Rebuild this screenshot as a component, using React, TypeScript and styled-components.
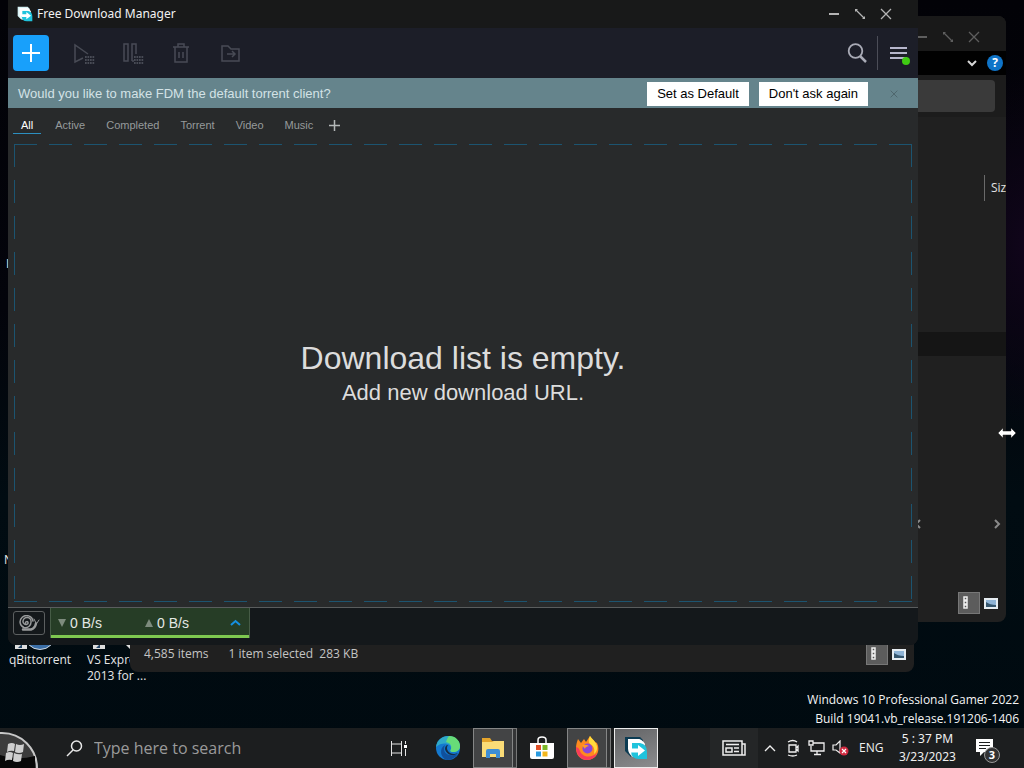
import React from "react";
import styled, { createGlobalStyle, css } from "styled-components";

const ui = `"Open Sans", "Noto Sans", sans-serif`;
const arial = `"Liberation Sans", Arial, sans-serif`;

const Global = createGlobalStyle`
  * { box-sizing: border-box; }
  body { margin: 0; background: #01080d; color: #e8e8e8; font: 12px/16px ${ui}; overflow: hidden; }
  button, input { font: inherit; color: inherit; }
  button { border: 0; padding: 0; background: none; display: inline-flex; align-items: center; justify-content: center; }
  svg { display: block; flex: none; }
`;

const Desktop = styled.div`
  min-height: 100vh;
  display: flex;
  flex-direction: column;
  background:
    radial-gradient(ellipse 80px 180px at 100% 32%, #10051a 0%, transparent 100%),
    linear-gradient(180deg, #020207 0%, #03040b 40%, #010c12 65%, #000a10 100%);
`;
const Area = styled.main`
  flex: 1;
  position: relative;
`;

/* desktop shortcuts */
const Shortcut = styled.a<{ $left: number; $top: number; $width: number }>`
  position: absolute;
  left: ${p => p.$left}px;
  top: ${p => p.$top}px;
  width: ${p => p.$width}px;
  display: flex;
  flex-direction: column;
  color: #e6e6e6;
  text-decoration: none;
  white-space: nowrap;
`;
const Build = styled.div`
  position: absolute;
  right: 5px;
  bottom: 0;
  text-align: right;
  line-height: 19px;
  color: #f4f4f4;
`;
const Cursor = styled.svg`
  position: absolute;
  left: 997px;
  top: 427px;
`;

/* windows */
const Explorer = styled.section<{ $top: number; $left: number; $right: number; $bottom: number }>`
  position: absolute;
  top: ${p => p.$top}px;
  left: ${p => p.$left}px;
  right: ${p => p.$right}px;
  bottom: ${p => p.$bottom}px;
  display: flex;
  flex-direction: column;
  overflow: hidden;
  border-radius: 8px;
  background: #202020;
  color: #c4c4c4;
`;
const ExTitle = styled.header`
  height: 35px;
  padding: 6px 26px 0 0;
  display: flex;
  align-items: center;
  justify-content: flex-end;
  gap: 14px;
  background: #191919;
  color: #5e5e5e;
`;
const ExRibbon = styled.div`
  height: 24px;
  padding-right: 3px;
  display: flex;
  align-items: center;
  justify-content: flex-end;
  gap: 9px;
  background: #010101;
  color: #d6d6d6;
`;
const HelpButton = styled.button`
  width: 16px;
  height: 16px;
  border-radius: 8px;
  background: #0f74c8;
  color: #fff;
  font-weight: 700;
`;
const ExAddress = styled.div`
  padding: 5px 11px 5px 0;
  background: #1c1c1c;
`;
const AddressField = styled.input`
  display: block;
  width: 100%;
  height: 32px;
  border: 0;
  border-radius: 4px;
  background: #3a3a3a;
`;
const ExBody = styled.div`
  flex: 1;
  display: flex;
  flex-direction: column;
`;
const ColumnHead = styled.div`
  margin-top: 58px;
  display: flex;
  justify-content: flex-end;
  color: #e0e0e0;
`;
const SizeColumn = styled.span`
  height: 26px;
  width: 22px;
  padding-left: 6px;
  line-height: 26px;
  border-left: 1px solid #6a6a6a;
`;
const SelectedRow = styled.div`
  margin-top: 131px;
  height: 24px;
  background: #151515;
`;
const ScrollRow = styled.div`
  flex: 1;
  display: flex;
  align-items: flex-end;
  justify-content: flex-end;
  gap: 70px;
  padding: 0 4px 55px 0;
  color: #8a8a8a;
`;
const ExStatus = styled.footer<{ $height: number }>`
  height: ${p => p.$height}px;
  padding: 0 8px 0 14px;
  display: flex;
  align-items: center;
  gap: 20px;
`;
const Views = styled.div`
  margin-left: auto;
  display: flex;
  align-items: center;
  gap: 4px;
`;
const ViewButton = styled.button<{ $on?: boolean }>`
  height: 22px;
  ${p => p.$on && css`width: 22px; background: #5c5c5c; border: 1px solid #777; justify-content: flex-start; padding-left: 3px;`}
`;

const Fdm = styled.section`
  position: absolute;
  top: 0;
  left: 8px;
  right: 106px;
  bottom: 83px;
  display: flex;
  flex-direction: column;
  overflow: hidden;
  border-radius: 0 0 8px 8px;
  background: #16191b;
`;
const TitleBar = styled.header`
  height: 28px;
  padding: 0 26px 0 9px;
  display: flex;
  align-items: center;
  gap: 4px;
  background: #181919;
`;
const Title = styled.h1`
  margin: 0;
  flex: 1;
  font-family: "Noto Sans", sans-serif;
  font-size: 12px;
  font-weight: 400;
  color: #f2f2f2;
`;
const WindowButtons = styled.div`
  display: flex;
  gap: 14px;
  color: #b4b4b4;
`;
const Toolbar = styled.div`
  height: 50px;
  padding: 0 7px 0 5px;
  display: flex;
  align-items: center;
  background: #1c1e28;
`;
const AddButton = styled.button`
  width: 36px;
  height: 36px;
  border-radius: 4px;
  background: #18a0fb;
`;
const Tools = styled.div`
  flex: 1;
  display: flex;
  gap: 25px;
  padding-left: 22px;
`;
const Tool = styled.button`
  width: 24px;
  height: 24px;
  color: #484b55;
`;
const MenuButton = styled.button`
  height: 34px;
  margin-left: 10px;
  padding-left: 12px;
  border-left: 1px solid #4b4d57;
`;
const Banner = styled.div`
  height: 30px;
  padding: 1px 19px 0 10px;
  display: flex;
  align-items: center;
  gap: 10px;
  background: #65848c;
  color: #d3e2e6;
  font: 13px/16px ${arial};
`;
const BannerText = styled.p`
  margin: 0;
  flex: 1;
`;
const BannerButton = styled.button`
  height: 24px;
  padding: 0 10px;
  background: #fff;
  color: #000;
`;
const BannerClose = styled.button`
  width: 10px;
  margin-left: 11px;
  color: #4b6269;
`;
const Tabs = styled.nav`
  height: 36px;
  padding: 8px 5px 0;
  display: flex;
  align-items: flex-start;
  gap: 7px;
  background: #282a2b;
  font: 11px/18px ${arial};
`;
const Tab = styled.button<{ $on?: boolean }>`
  height: 18px;
  padding: 0 ${p => (p.$on ? 8 : 7)}px;
  color: ${p => (p.$on ? "#ffffff" : "#969a9b")};
  border-bottom: 1px solid ${p => (p.$on ? "#2c8fc0" : "transparent")};
`;
const AddTab = styled.button`
  width: 15px;
  height: 18px;
`;
const ListPane = styled.div`
  flex: 1;
  padding: 0 6px 5px;
  display: flex;
  background: #282a2b;
  border-bottom: 1px solid #5a5d5e;
`;
const across = "repeating-linear-gradient(90deg, #1c5470 0 23px, transparent 23px 35px)";
const down = "repeating-linear-gradient(180deg, #1c5470 0 23px, transparent 23px 36px)";
const DropZone = styled.div`
  flex: 1;
  padding-top: 4px;
  display: flex;
  flex-direction: column;
  align-items: center;
  justify-content: center;
  color: #dcdcdc;
  font-family: ${arial};
  background:
    ${across} top / 100% 1px no-repeat,
    ${across} bottom / 100% 1px no-repeat,
    ${down} left / 1px 100% no-repeat,
    ${down} right / 1px 100% no-repeat;
`;
const EmptyTitle = styled.h2`
  margin: 0;
  font-size: 32px;
  line-height: 36px;
  font-weight: 400;
`;
const EmptyHint = styled.p`
  margin: 0;
  font-size: 22px;
  line-height: 34px;
`;
const FdmStatus = styled.footer`
  height: 37px;
  padding: 0 5px 7px;
  display: flex;
  align-items: center;
  gap: 5px;
  background: #14181b;
`;
const SnailButton = styled.button`
  width: 32px;
  height: 24px;
  border: 1px solid #5c5f60;
  border-radius: 3px;
`;
const Speed = styled.button`
  width: 200px;
  height: 30px;
  padding: 0 8px 0 7px;
  justify-content: flex-start;
  background: #263d26;
  border: solid #465c46;
  border-width: 0 1px 0 1px;
  box-shadow: inset 0 -3px #7ec850;
  font: 14px/28px ${arial};
  color: #e4e8e4;
`;
const Rate = styled.span<{ $grow?: boolean }>`
  display: flex;
  align-items: center;
  gap: 4px;
  ${p => (p.$grow ? "flex: 1;" : "width: 87px;")}
`;

/* taskbar */
const Taskbar = styled.footer`
  height: 40px;
  display: flex;
  align-items: stretch;
  background: #1c1e1f;
`;
const StartButton = styled.button`
  width: 46px;
  align-self: stretch;
`;
const Search = styled.label`
  flex: 1;
  min-width: 0;
  padding-left: 20px;
  display: flex;
  align-items: center;
  gap: 11px;
`;
const SearchInput = styled.input`
  flex: 1;
  min-width: 0;
  padding: 0;
  border: 0;
  outline: 0;
  background: none;
  font-size: 16px;
  line-height: 22px;
  &::placeholder { color: #9a9a9a; opacity: 1; }
`;
const Apps = styled.div`
  display: flex;
  align-items: stretch;
`;
const AppButton = styled.button<{ $open?: boolean; $active?: boolean }>`
  width: 50px;
  ${p => p.$open && css`
    width: 40px;
    margin-right: 4px;
    background: #434445;
    border: 1px solid #858686;
    box-shadow: 4px 0 0 -1px #343536, 4px 0 0 0 #777878;
  `}
  ${p => p.$active && css`
    width: 44px;
    margin-left: 3px;
    background: linear-gradient(160deg, #636466, #8b8c8e);
    border: 1px solid #ececec;
  `}
`;
const Tray = styled.div`
  width: 366px;
  display: flex;
  align-items: center;
  padding-left: 52px;
  color: #f0f0f0;
`;
const News = styled.button`
  width: 48px;
  height: 40px;
  background: #242627;
`;
const TrayIcons = styled.div`
  display: flex;
  align-items: center;
  gap: 7px;
  padding: 0 10px 0 6px;
`;
const Clock = styled.div`
  width: 84px;
  margin-left: 2px;
  font-family: "Noto Sans", sans-serif;
  text-align: center;
  line-height: 18px;
  white-space: pre;
`;
const Notice = styled.button`
  margin-left: 6px;
  padding-top: 6px;
`;

const Minimize = () => <svg width="12" height="12" viewBox="0 0 12 12"><path d="M1 6h10" stroke="currentColor" strokeWidth="2" /></svg>;
const Expand = () => (
  <svg width="12" height="12" viewBox="0 0 12 12" fill="none" stroke="currentColor">
    <path d="M1.500 1.500l9 9" strokeWidth="1.300" /><path d="M1 1h3L1 4zM11 11H8L11 8z" fill="currentColor" stroke="none" />
  </svg>
);
const Close = ({ size = 12 }: { size?: number }) => (
  <svg width={size} height={size} viewBox="0 0 12 12" fill="none" stroke="currentColor" strokeWidth="1.300"><path d="M1 1l10 10M11 1L1 11" /></svg>
);
const Controls = () => (
  <>
    <button aria-label="Minimize"><Minimize /></button>
    <button aria-label="Maximize"><Expand /></button>
    <button aria-label="Close"><Close /></button>
  </>
);
const FdmLogo = ({ size, edge }: { size: number; edge: string }) => (
  <svg width={size} height={size} viewBox="0 0 24 24">
    <path d="M1 1h15l3 3v6H7v11l-6-6z" fill={edge} />
    <path d="M4 3h10q4 0 7 5l-3 13H9q-5-3-5-9z" fill="#fff" />
    <path d="M7 7h9q7 1 7 9v7h-8q-8 0-8-8z" fill="#20c3dc" />
    <path d="M4 3h11l4 4H8v9l-4-3z" fill="#fff" />
    <path d="M7 12.500h7V9l7 5.500-7 5.500v-3.500H7z" fill="#fff" />
  </svg>
);
const Dots = () => (
  <g fill="currentColor" stroke="none">
    {[0, 1, 2].map(r => [0, 1, 2, 3].map(c => <rect key={`${r}${c}`} x={14 + c * 2.500} y={15 + r * 3} width="1.700" height="2" />))}
  </g>
);
const ListIcon = () => (
  <svg width="8" height="14" viewBox="0 0 8 14" fill="#555" stroke="#eee" strokeWidth="1.500"><path d="M2 1h3v3H2zM2 5h3v3H2zM2 9h3v3H2z" /></svg>
);
const PictureIcon = () => (
  <svg width="14" height="11" viewBox="0 0 14 11"><path d="M0 0h14v11H0z" fill="#e6edf2" /><path d="M2 2h10v7H2z" fill="#8fb4d6" /><path d="M2 4q4 3 10 3v2H2z" fill="#35566e" /></svg>
);
const ViewSwitch = () => (
  <Views>
    <ViewButton $on aria-label="Details"><ListIcon /></ViewButton>
    <ViewButton aria-label="Large icons"><PictureIcon /></ViewButton>
  </Views>
);
const ScrollArrow = ({ flip }: { flip?: boolean }) => (
  <svg width="9" height="10" viewBox="0 0 9 10" fill="none" stroke="currentColor" strokeWidth="2"><path d={flip ? "M6 1L2 5l4 4" : "M2 1l4 4-4 4"} /></svg>
);

export default function App() {
  return (
    <>
      <Global />
      <Desktop>
        <Area>
          <Shortcut href="#qb" $left={9} $top={640} $width={70}>
            <svg width="60" height="12" viewBox="0 0 60 12"><path d="M6 0h12v9H6z" fill="#ddd" /><path d="M9 8l4-4v4z" fill="#246" /><circle cx="31" cy="-6" r="15.500" fill="#3b6fa8" stroke="#cfd8e0" /></svg>
            qBittorrent
          </Shortcut>
          <Shortcut href="#vs" $left={87} $top={640} $width={70}>
            <svg width="60" height="12" viewBox="0 0 60 12"><path d="M6 0h12v9H6z" fill="#ddd" /><path d="M9 8l4-4v4z" fill="#246" /><path d="M36 2h7v7z" fill="#ddd" /></svg>
            <span>VS Express<br />2013 for ...</span>
          </Shortcut>
          <Shortcut href="#n" $left={4} $top={552} $width={30}>N</Shortcut>
          <Shortcut href="#i" $left={6} $top={256} $width={30}>I</Shortcut>
          <Build>
            <div>Windows 10 Professional Gamer 2022</div>
            <div>Build 19041.vb_release.191206-1406</div>
          </Build>

          <Explorer $top={16} $left={300} $right={18} $bottom={106} aria-label="File Explorer">
            <ExTitle><Controls /></ExTitle>
            <ExRibbon>
              <button aria-label="Expand ribbon"><svg width="12" height="8" viewBox="0 0 12 8" fill="none" stroke="currentColor" strokeWidth="2"><path d="M2 2l4 4 4-4" /></svg></button>
              <HelpButton>?</HelpButton>
            </ExRibbon>
            <ExAddress><AddressField aria-label="Address" /></ExAddress>
            <ExBody>
              <ColumnHead><SizeColumn>Siz</SizeColumn></ColumnHead>
              <SelectedRow />
              <ScrollRow>
                <button aria-label="Scroll left"><ScrollArrow flip /></button>
                <button aria-label="Scroll right"><ScrollArrow /></button>
              </ScrollRow>
            </ExBody>
            <ExStatus $height={38}><ViewSwitch /></ExStatus>
          </Explorer>

          <Explorer $top={200} $left={130} $right={110} $bottom={56} aria-label="Folder">
            <ExBody />
            <ExStatus $height={36}>
              <span>4,585 items</span>
              <span>1 item selected&nbsp; 283 KB</span>
              <ViewSwitch />
            </ExStatus>
          </Explorer>

          <Fdm>
            <TitleBar>
              <FdmLogo size={16} edge="#d8f4f6" />
              <Title>Free Download Manager</Title>
              <WindowButtons><Controls /></WindowButtons>
            </TitleBar>
            <Toolbar>
              <AddButton aria-label="Add download"><svg width="20" height="20" viewBox="0 0 20 20" stroke="#fff" strokeWidth="2"><path d="M1 10h18M10 1v18" /></svg></AddButton>
              <Tools>
                <Tool aria-label="Start all"><svg width="24" height="24" viewBox="0 0 24 24" fill="none" stroke="currentColor" strokeWidth="1.500"><path d="M12 17l-8 4V4l13 9" /><Dots /></svg></Tool>
                <Tool aria-label="Pause all"><svg width="24" height="24" viewBox="0 0 24 24" fill="none" stroke="currentColor" strokeWidth="1.500"><path d="M4 3h4v17H4zM12 20V3h4v10M12 20h2" /><Dots /></svg></Tool>
                <Tool aria-label="Delete"><svg width="24" height="24" viewBox="0 0 24 24" fill="none" stroke="currentColor" strokeWidth="1.500"><path d="M4 6h16M9 6V3h6v3M6 6v15h12V6M10 11v6M14 11v6" /></svg></Tool>
                <Tool aria-label="Move to folder"><svg width="24" height="24" viewBox="0 0 24 24" fill="none" stroke="currentColor" strokeWidth="1.500"><path d="M4 20V5h6l3 3h8v12H4zM9 13h8M14 10l3 3-3 3" /></svg></Tool>
              </Tools>
              <button aria-label="Search"><svg width="20" height="20" viewBox="0 0 20 20" fill="none" stroke="#a9abb6" strokeWidth="1.800"><circle cx="8.500" cy="8" r="6.800" /><path d="M13 13l6 6" strokeWidth="2.500" /></svg></button>
              <MenuButton aria-label="Menu"><svg width="21" height="24" viewBox="0 0 21 24"><path d="M0 7h17M0 12h17M0 17h17" stroke="#b6b6cc" strokeWidth="2" /><circle cx="16" cy="20" r="4" fill="#3fcb13" /></svg></MenuButton>
            </Toolbar>
            <Banner>
              <BannerText>Would you like to make FDM the default torrent client?</BannerText>
              <BannerButton>Set as Default</BannerButton>
              <BannerButton>Don't ask again</BannerButton>
              <BannerClose aria-label="Dismiss"><Close size={8} /></BannerClose>
            </Banner>
            <Tabs>
              <Tab $on>All</Tab>
              <Tab>Active</Tab>
              <Tab>Completed</Tab>
              <Tab>Torrent</Tab>
              <Tab>Video</Tab>
              <Tab>Music</Tab>
              <AddTab aria-label="Add tab"><svg width="11" height="11" viewBox="0 0 11 11" stroke="#b4b8b8" strokeWidth="1.500"><path d="M0 5.500h11M5.500 0v11" /></svg></AddTab>
            </Tabs>
            <ListPane>
              <DropZone>
                <EmptyTitle>Download list is empty.</EmptyTitle>
                <EmptyHint>Add new download URL.</EmptyHint>
              </DropZone>
            </ListPane>
            <FdmStatus>
              <SnailButton aria-label="Snail mode">
                <svg width="22" height="16" viewBox="0 0 22 16" fill="none" stroke="#999b9c" strokeWidth="1.500" strokeLinecap="round">
                  <path d="M7.500 8a1.300 1.300 0 1 1 1.500 1.200 3 3 0 0 1-4-3.200 4 4 0 0 1 8 1 5.500 5.500 0 0 1-7 5.500A6 6 0 0 1 4 2.500 6.500 6.500 0 0 1 15 6" />
                  <path d="M5 14.500h8q4-1 5-6" strokeWidth="2.500" /><path d="M18 8l-2-4M19 8l2-3" strokeWidth="1" />
                </svg>
              </SnailButton>
              <Speed aria-label="Speed">
                <Rate><svg width="8" height="8" viewBox="0 0 8 8"><path d="M0 0h8L4 8z" fill="#7d8b7d" /></svg>0 B/s</Rate>
                <Rate $grow><svg width="8" height="8" viewBox="0 0 8 8"><path d="M0 8h8L4 0z" fill="#7d8b7d" /></svg>0 B/s</Rate>
                <svg width="11" height="8" viewBox="0 0 11 8" fill="none" stroke="#158fe0" strokeWidth="2"><path d="M1 6l4.500-4L10 6" /></svg>
              </Speed>
            </FdmStatus>
          </Fdm>

          <Cursor width="20" height="12" viewBox="0 0 20 12"><path d="M1 6l5-5v3h8V1l5 5-5 5V8H6v3z" fill="#fff" stroke="#222" strokeWidth=".5" /></Cursor>
        </Area>

        <Taskbar>
          <StartButton aria-label="Start">
            <svg width="46" height="40" viewBox="0 0 46 40">
              <circle cx="2" cy="40" r="35" fill="#3c3c3c" stroke="#c8c8c8" strokeWidth="2" />
              <path d="M0 27q16 6 35 1v12H0z" fill="#080808" />
              <path d="M8 16q4-2 7 0l-1 7q-4-1-7 1zM16 16q4 2 8 0l-1 8q-4 2-8 0zM6 25q4-2 7 0l-1 7q-4-1-7 1zM14 25q4 2 8 1l-1 7q-4 2-8 0z" fill="#cfcfcf" />
            </svg>
          </StartButton>
          <Search>
            <svg width="17" height="17" viewBox="0 0 17 17" fill="none" stroke="#e8e8e8" strokeWidth="1.500"><circle cx="10.500" cy="6" r="5" /><path d="M7 10l-6 6" /></svg>
            <SearchInput aria-label="Search" placeholder="Type here to search" />
          </Search>
          <Apps>
            <AppButton aria-label="Task View"><svg width="17" height="17" viewBox="0 0 17 17" fill="none" stroke="#e4e4e4"><path d="M1.500 1v3h10V1M1.500 16v-3h10v3M1.500 4v9M11.500 4v9M15.500 1v3M15.500 9v7" /><path d="M14 5h3v3h-3z" fill="#fff" stroke="none" /></svg></AppButton>
            <AppButton aria-label="Edge">
              <svg width="24" height="24" viewBox="0 0 24 24">
                <circle cx="12" cy="12" r="12" fill="#1479cf" />
                <path d="M0 11C1 4 6 0 12 0c7 0 12 5 12 10 0 4-3 6-7 6-3 0-3-1-2-3 1-6-9-8-15-2z" fill="#2fa9c8" />
                <path d="M13 0c7 0 11 5 11 10 0 4-3 6-7 6-3 0-3-1-2-3 1-4-1-6-5-7 1-3 2-5 3-6z" fill="#67dc78" />
                <path d="M9 9c-3 6 1 13 13 9-3 4-7 6-11 6C4 22 3 12 9 9z" fill="#10509c" />
                <path d="M12 9c-3 4 1 9 6 9 2 0 3-1 4-1-4 4-12 2-13-4 0-2 1-4 3-4z" fill="#172c44" />
              </svg>
            </AppButton>
            <AppButton $open aria-label="File Explorer">
              <svg width="24" height="22" viewBox="0 0 24 22"><path d="M1 1h8l2 3h12v16H1z" fill="#e5a52c" /><path d="M1 5h10l2-1h10v16H1z" fill="#fbdc77" /><path d="M5 21v-7q0-2 2-2h10q2 0 2 2v7h-4v-4H9v4z" fill="#3f8ed4" /></svg>
            </AppButton>
            <AppButton aria-label="Store">
              <svg width="24" height="24" viewBox="0 0 24 24"><path d="M8 7V4q0-3 4-3t4 3v3" fill="none" stroke="#fff" strokeWidth="1.500" /><path d="M0 7h24v14q0 2-2 2H2q-2 0-2-2z" fill="#fff" /><path d="M6 9h5v5H6z" fill="#e05028" /><path d="M12.500 9h5v5h-5z" fill="#7cb728" /><path d="M6 15.500h5v5H6z" fill="#2a9be0" /><path d="M12.500 15.500h5v5h-5z" fill="#f2b61c" /></svg>
            </AppButton>
            <AppButton $open aria-label="Firefox">
              <svg width="24" height="24" viewBox="0 0 24 24"><path d="M3 3l3 4 3-4 2 3 4-6c2 3 4 4 5 6l2 1c4 8-1 17-10 17S-2 15 3 3z" fill="#ff8a1e" /><path d="M15 0c2 3 4 4 5 6 3 4 3 9-1 12 1-5 0-8-4-10-2-2-1-6 0-8z" fill="#ffdc3c" /><path d="M1 11c0 8 5 13 11 13 5 0 9-3 10-7-4 4-11 5-15 1-3-3-2-6-6-7z" fill="#f83a5c" /><circle cx="12.500" cy="12.500" r="5" fill="#8a46d8" /><path d="M7 9q4-1 7 1-4 1-4 3z" fill="#ff9a28" /></svg>
            </AppButton>
            <AppButton $active aria-label="Free Download Manager"><FdmLogo size={24} edge="#0c3b52" /></AppButton>
          </Apps>
          <Tray>
            <News aria-label="News">
              <svg width="24" height="16" viewBox="0 0 24 16" fill="none" stroke="#eee" strokeWidth="1.500"><path d="M1 1h19v14H1zM20 4h3v11h-3M4 4.500h13M4 8h6v4H4zM12 8h5M12 11.500h5" /></svg>
            </News>
            <TrayIcons>
              <button aria-label="Hidden icons"><svg width="12" height="8" viewBox="0 0 12 8" fill="none" stroke="currentColor" strokeWidth="1.300"><path d="M1 7l5-5 5 5" /></svg></button>
              <svg width="18" height="18" viewBox="0 0 18 18" fill="none" stroke="currentColor" strokeWidth="1.300"><path d="M6 6h7v7H6zM13 9l2-2v5l-2-2M5 3q5-3 9 0M5 16q5 2 9 0" /></svg>
              <svg width="17" height="16" viewBox="0 0 17 16" fill="none" stroke="currentColor" strokeWidth="1.300"><path d="M5 3h11v8H3V6M1 1h4v4H1zM9 11v3M6 14.500h7" /></svg>
              <svg width="17" height="16" viewBox="0 0 17 16"><path d="M1 5h3l4-4v12L4 10H1z" fill="none" stroke="currentColor" strokeWidth="1.200" /><circle cx="12" cy="11" r="4.500" fill="#d12a40" /><path d="M10 9l4 4M14 9l-4 4" stroke="#fff" strokeWidth="1.200" /></svg>
            </TrayIcons>
            <span>ENG</span>
            <Clock>5 : 37 PM{"\n"}3/23/2023</Clock>
            <Notice aria-label="3 notifications">
              <svg width="26" height="26" viewBox="0 0 26 26"><path d="M1 1h17v13H9l-4 4v-4H1z" fill="#fff" /><path d="M4 4.500h11M4 7.500h11M4 10.500h7" stroke="#1c1e1f" /><circle cx="17" cy="17" r="7.500" fill="#333" stroke="#999" /><text x="17" y="21" fill="#fff" fontSize="11" fontWeight="700" textAnchor="middle">3</text></svg>
            </Notice>
          </Tray>
        </Taskbar>
      </Desktop>
    </>
  );
}
